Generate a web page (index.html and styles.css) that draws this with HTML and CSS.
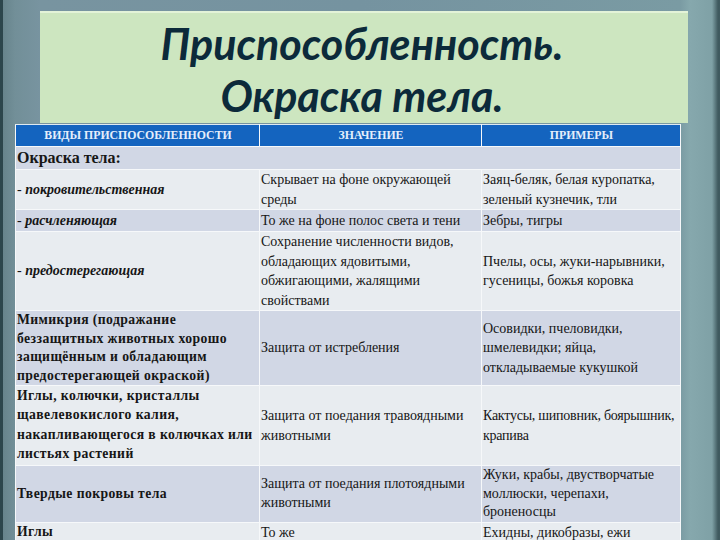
FILE: index.html
```html
<!DOCTYPE html>
<html lang="ru">
<head>
<meta charset="utf-8">
<link rel="stylesheet" href="styles.css">
</head>
<body>
<div class="slide">
  <div class="title-box">
    <h1 class="title">Приспособленность.<br>Окраска тела.</h1>
  </div>
  <table class="grid">
    <colgroup><col class="c1"><col class="c2"><col class="c3"></colgroup>
    <thead>
      <tr class="head"><th>ВИДЫ ПРИСПОСОБЛЕННОСТИ</th><th>ЗНАЧЕНИЕ</th><th>ПРИМЕРЫ</th></tr>
    </thead>
    <tbody>
      <tr class="dark r-sec"><td class="sec" colspan="3">Окраска тела:</td></tr>
      <tr class="light r1"><td class="kind">- <b><i>покровительственная</i></b></td><td>Скрывает на фоне окружающей среды</td><td>Заяц-беляк, белая куропатка, зеленый кузнечик, тли</td></tr>
      <tr class="dark r2"><td class="kind">- <b><i>расчленяющая</i></b></td><td>То же на фоне полос света и тени</td><td>Зебры, тигры</td></tr>
      <tr class="light r3"><td class="kind">- <b><i>предостерегающая</i></b></td><td>Сохранение численности видов, обладающих ядовитыми, обжигающими, жалящими свойствами</td><td>Пчелы, осы, жуки-нарывники, гусеницы, божья коровка</td></tr>
      <tr class="dark r4"><td class="bold top">Мимикрия (подражание беззащитных животных хорошо защищённым и обладающим предостерегающей окраской)</td><td>Защита от истребления</td><td>Осовидки, пчеловидки, шмелевидки; яйца, откладываемые кукушкой</td></tr>
      <tr class="light r5"><td class="bold top">Иглы, колючки, кристаллы щавелевокислого калия, накапливающегося в колючках или листьях растений</td><td>Защита от поедания травоядными животными</td><td class="tight">Кактусы, шиповник, боярышник, крапива</td></tr>
      <tr class="dark r6"><td class="bold">Твердые покровы тела</td><td>Защита от поедания плотоядными животными</td><td>Жуки, крабы, двустворчатые моллюски, черепахи, броненосцы</td></tr>
      <tr class="light r7"><td class="bold top">Иглы</td><td class="top">То же</td><td class="top">Ехидны, дикобразы, ежи</td></tr>
    </tbody>
  </table>
</div>
</body>
</html>
```
FILE: styles.css
```css
html, body {
  margin: 0;
  padding: 0;
}
body {
  width: 720px;
  height: 540px;
  overflow: hidden;
}
.slide {
  width: 720px;
  height: 540px;
  overflow: hidden;
  background:
    linear-gradient(90deg, #2c464c 0, #2c464c 3px, #67848c 3px, #728f98 15px, #7894a0 40px, #7593a0 50%, #7a9ba3 680px, #86a8ad 690px, #7fa1a6 712px, #3f5a5f 718px);
  padding-top: 11px;
  box-sizing: border-box;
}
.title-box {
  margin-left: 40px;
  width: 648px;
  height: 112px;
  background: #cde6c0;
  border-top: 2px solid #e3f3d8;
  box-sizing: border-box;
  display: flex;
  align-items: center;
  justify-content: center;
}
.title {
  margin: 0;
  font-family: Lato, "Open Sans", sans-serif;
  font-style: italic;
  font-weight: 700;
  font-size: 43px;
  line-height: 52px;
  color: #0c2a3a;
  text-align: center;
  padding-top: 4px;
  padding-right: 4px;
}
.grid {
  margin-left: 15px;
  margin-top: 1px;
  width: 665px;
  border-collapse: collapse;
  table-layout: fixed;
  font-family: "Liberation Serif", "DejaVu Serif", serif;
  font-size: 14px;
  line-height: 19.5px;
  color: #161616;
}
.c1 { width: 244px; }
.c2 { width: 222px; }
.c3 { width: 199px; }
.grid th, .grid td {
  padding: 0 0 0 1px;
  border: 1px solid #f6f8fa;
  text-align: left;
  vertical-align: middle;
}
.grid td.top { vertical-align: top; }
.grid td.tight { letter-spacing: -0.25px; }
.head th {
  background: #1464bf;
  color: #e4eefb;
  font-weight: 700;
  font-size: 11.8px;
  height: 21px;
  text-align: center;
  border-top: 1px solid #dfe9f0;
}
.dark td { background: #d1d7e5; }
.light td { background: #e8ecf0; }
.sec {
  font-weight: 700;
  font-size: 16px;
  height: 22px;
}
.r1 td { height: 39px; }
.r2 td { height: 21px; }
.r3 td { height: 77px; }
.r4 td { height: 74px; }
.r5 td { height: 79px; }
.r6 td { height: 56px; line-height: 18.6px; }
.r7 td { height: 30px; }
.kind {
  font-size: 14px;
}
.bold {
  font-weight: 700;
  font-size: 13.7px;
  line-height: 18.5px;
  letter-spacing: 0.4px;
}
.r5 .bold { line-height: 19.3px; }
```
